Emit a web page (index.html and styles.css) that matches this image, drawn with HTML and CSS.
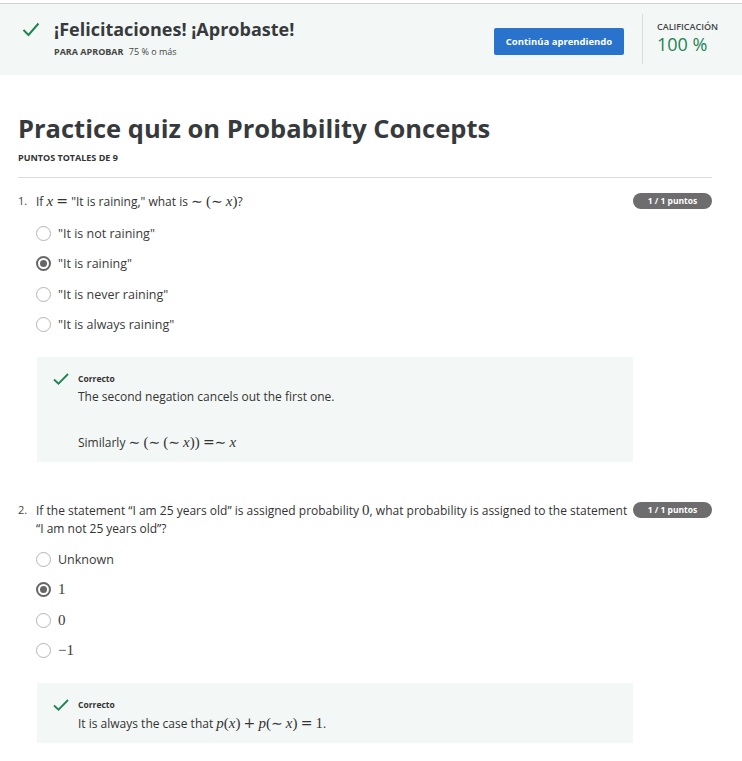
FILE: index.html
```html
<!DOCTYPE html>
<html lang="es">
<head>
<meta charset="utf-8">
<link rel="stylesheet" href="styles.css">
</head>
<body>
<div class="header">
  <div class="hd-left">
    <svg class="hd-check" width="18" height="15" viewBox="0 0 18 15"><path d="M1.5 8 L6.5 13 L16.5 1.5" fill="none" stroke="#1f8354" stroke-width="2"/></svg>
    <div>
      <div class="hd-title">¡Felicitaciones! ¡Aprobaste!</div>
      <div class="hd-sub"><span class="hd-sub-b">PARA APROBAR</span> 75 % o más</div>
    </div>
  </div>
  <button class="btn">Continúa aprendiendo</button>
  <div class="grade">
    <div class="grade-label">CALIFICACIÓN</div>
    <div class="grade-val">100 %</div>
  </div>
</div>

<div class="main">
  <h1 class="quiz-title">Practice quiz on Probability Concepts</h1>
  <div class="total">PUNTOS TOTALES DE 9</div>
  <hr class="sep">

  <div class="q">
    <div class="q-head">
      <span class="q-num">1.</span>
      <div class="q-text">If <i class="m">x</i> <span class="mo">=</span> "It is raining," what is <span class="mo">∼</span> <span class="mr">(</span><span class="mo">∼</span> <i class="m">x</i><span class="mr">)</span>?</div>
      <span class="badge">1 / 1 puntos</span>
    </div>
    <div class="opts">
      <div class="opt"><span class="radio"></span>"It is not raining"</div>
      <div class="opt"><span class="radio on"></span>"It is raining"</div>
      <div class="opt"><span class="radio"></span>"It is never raining"</div>
      <div class="opt"><span class="radio"></span>"It is always raining"</div>
    </div>
    <div class="fb">
      <svg class="fb-check" width="16" height="12" viewBox="0 0 16 12"><path d="M1 6.5 L5.5 10.7 L15 1" fill="none" stroke="#1f8354" stroke-width="1.8"/></svg>
      <div class="fb-body">
        <div class="fb-label">Correcto</div>
        <div class="fb-text">The second negation cancels out the first one.</div>
        <div class="fb-text fb-sim">Similarly <span class="mo">∼</span> <span class="mr">(</span><span class="mo">∼</span> <span class="mr">(</span><span class="mo">∼</span> <i class="m">x</i><span class="mr">))</span> <span class="mo">=∼</span> <i class="m">x</i></div>
      </div>
    </div>
  </div>

  <div class="q q2">
    <div class="q-head">
      <span class="q-num">2.</span>
      <div class="q-text">If the statement “I am 25 years old” is assigned probability <span class="mr">0</span>, what probability is assigned to the statement “I am not 25 years old”?</div>
      <span class="badge">1 / 1 puntos</span>
    </div>
    <div class="opts opts2">
      <div class="opt"><span class="radio"></span>Unknown</div>
      <div class="opt"><span class="radio on"></span><span class="mr">1</span></div>
      <div class="opt"><span class="radio"></span><span class="mr">0</span></div>
      <div class="opt"><span class="radio"></span><span class="mr">−1</span></div>
    </div>
    <div class="fb">
      <svg class="fb-check" width="16" height="12" viewBox="0 0 16 12"><path d="M1 6.5 L5.5 10.7 L15 1" fill="none" stroke="#1f8354" stroke-width="1.8"/></svg>
      <div class="fb-body">
        <div class="fb-label">Correcto</div>
        <div class="fb-text">It is always the case that <i class="m">p</i><span class="mr">(</span><i class="m">x</i><span class="mr">)</span> <span class="mo">+</span> <i class="m">p</i><span class="mr">(</span><span class="mo">∼</span> <i class="m">x</i><span class="mr">)</span> <span class="mo">=</span> <span class="mr">1</span>.</div>
      </div>
    </div>
  </div>
</div>
</body>
</html>
```
FILE: styles.css
```css
* { box-sizing: border-box; }
body {
  margin: 0;
  font-family: "Open Sans", "Liberation Sans", sans-serif;
  color: #333;
  background: #fff;
}
.header {
  margin-top: 3px;
  border-top: 1px solid #cfcfcf;
  background: #f3f8f6;
  height: 72px;
  display: flex;
  align-items: center;
}
.hd-left {
  flex: 1;
  display: flex;
  align-items: flex-start;
  padding-left: 22px;
  margin-top: -4px;
}
.hd-check { margin-top: 5px; margin-right: 14px; }
.hd-title {
  font-size: 18px;
  font-weight: 700;
  color: #373a3c;
  line-height: 24px;
}
.hd-sub {
  font-size: 9px;
  color: #444;
  margin-top: 4px;
}
.hd-sub-b { font-weight: 700; margin-right: 3px; }
.btn {
  background: #2a73cc;
  color: #fff;
  border: none;
  border-radius: 2px;
  font-family: inherit;
  font-size: 9.5px;
  font-weight: 700;
  width: 130px;
  height: 27px;
  margin-top: 4px;
  margin-right: 18px;
}
.grade {
  border-left: 1px solid #dcdcdc;
  height: 50px;
  padding-left: 14px;
  width: 100px;
  margin-top: -2px;
}
.grade-label {
  font-size: 9px;
  font-weight: 600;
  color: #444;
  margin-top: 6px;
}
.grade-val {
  font-size: 18px;
  color: #1f8354;
  line-height: 22px;
}
.main { padding: 0 30px 0 18px; }
.quiz-title {
  margin: 36px 0 0;
  font-size: 25.5px;
  font-weight: 700;
  color: #373a3c;
  line-height: 34px;
}
.total {
  font-size: 9px;
  font-weight: 700;
  color: #333;
  margin-top: 6px;
}
.sep {
  border: none;
  border-top: 1px solid #dcdcdc;
  margin: 13px 0 0;
}
.q { margin-top: 14px; }
.q2 { margin-top: 39px; }
.q-head {
  display: flex;
  align-items: flex-start;
}
.q-num {
  width: 18px;
  font-size: 11px;
  line-height: 18px;
  color: #444;
}
.q-text {
  flex: 1;
  font-size: 12px;
  line-height: 18px;
  color: #333;
  padding-right: 4px;
}
.badge {
  background: #6d6d6d;
  color: #fff;
  font-size: 8.5px;
  font-weight: 700;
  border-radius: 8px;
  width: 79px;
  height: 16px;
  line-height: 16px;
  text-align: center;
  margin-top: 1px;
  flex: none;
}
.opts { padding-left: 18px; margin-top: 7px; }
.opts2 { margin-top: 6px; }
.opt {
  display: flex;
  align-items: center;
  height: 30.5px;
  font-size: 12.5px;
  color: #3a3a3a;
}
.radio {
  width: 15px;
  height: 15px;
  border-radius: 50%;
  border: 1px solid #b5b5b5;
  margin-right: 7px;
  position: relative;
  flex: none;
}
.radio.on { border: 2px solid #666; }
.radio.on::after {
  content: "";
  position: absolute;
  left: 2px; top: 2px;
  width: 7px; height: 7px;
  border-radius: 50%;
  background: #666;
}
.fb {
  margin: 17px 79px 0 19px;
  background: #f3f8f6;
  display: flex;
  padding: 16px 16px 10px 16px;
}
.fb-check { margin-right: 9px; flex: none; }
.fb-label {
  font-size: 8.5px;
  font-weight: 700;
  color: #333;
  line-height: 12px;
}
.fb-text {
  font-size: 12px;
  line-height: 18px;
  color: #333;
  margin-top: 3px;
}
.fb-sim { margin-top: 27px; }
.m { font-style: italic; font-family: "Liberation Serif", serif; font-size: 15px; }
.mr { font-family: "Liberation Serif", serif; font-size: 15px; }
.mo { font-family: "DejaVu Serif", serif; font-size: 14px; }
```
